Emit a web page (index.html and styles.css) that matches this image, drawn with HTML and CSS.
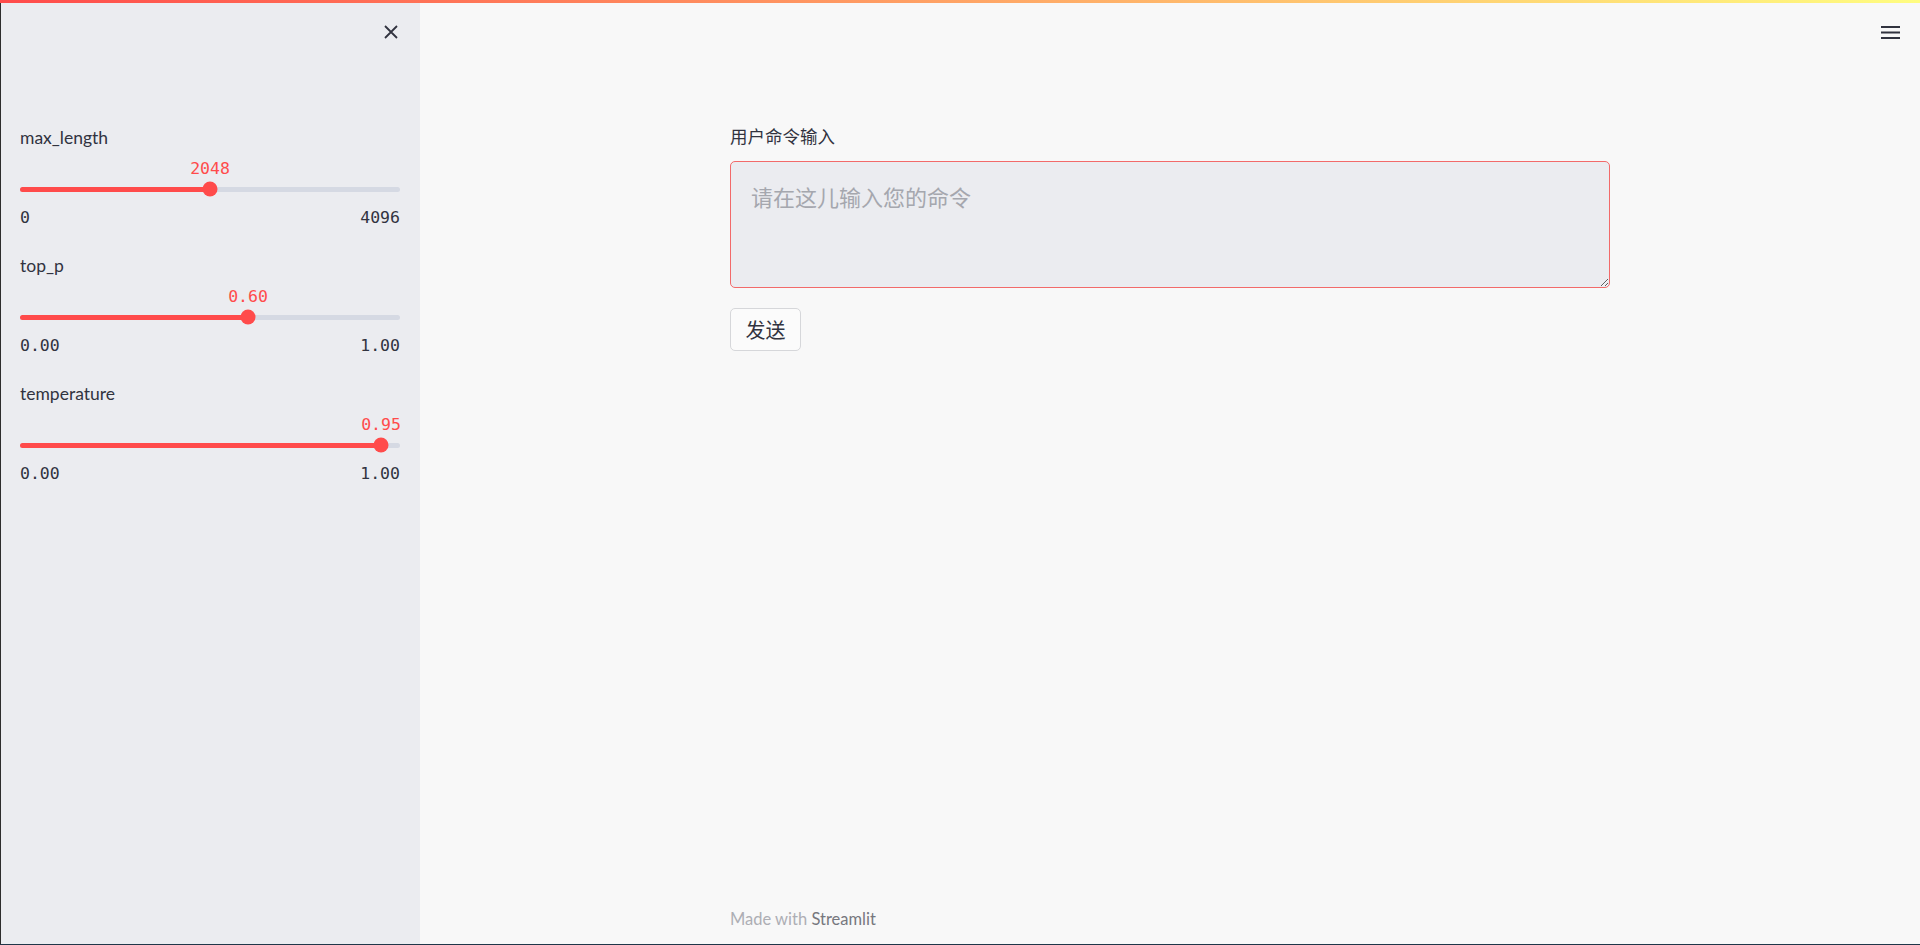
FILE: index.html
```html
<!DOCTYPE html>
<html lang="zh">
<head>
    <meta charset="UTF-8">
    <meta name="viewport" content="width=device-width, initial-scale=1.0">
    <title>app</title>
    <link rel="stylesheet" href="styles.css">
</head>
<body>
    <!-- top decoration -->
    <div class="decoration"></div>

    <div class="app">
        <aside class="sidebar">
            <div class="sidebar-head">
                <button class="close-btn" aria-label="close">
                    <svg width="14" height="14" viewBox="0 0 14 14">
                        <path d="M1 1 L13 13 M13 1 L1 13" stroke="#31333f" stroke-width="1.8" fill="none"/>
                    </svg>
                </button>
            </div>

            <div class="slider">
                <div class="slider-label">max_length</div>
                <div class="slider-value-row">
                    <span class="slider-value" style="left: 50%">2048</span>
                </div>
                <div class="track-wrap">
                    <div class="track"><div class="fill" style="width: 50%"></div></div>
                    <div class="thumb" style="left: 50%"></div>
                </div>
                <div class="ticks"><span>0</span><span>4096</span></div>
            </div>

            <div class="slider">
                <div class="slider-label">top_p</div>
                <div class="slider-value-row">
                    <span class="slider-value" style="left: 60%">0.60</span>
                </div>
                <div class="track-wrap">
                    <div class="track"><div class="fill" style="width: 60%"></div></div>
                    <div class="thumb" style="left: 60%"></div>
                </div>
                <div class="ticks"><span>0.00</span><span>1.00</span></div>
            </div>

            <div class="slider">
                <div class="slider-label">temperature</div>
                <div class="slider-value-row">
                    <span class="slider-value" style="left: 95%">0.95</span>
                </div>
                <div class="track-wrap">
                    <div class="track"><div class="fill" style="width: 95%"></div></div>
                    <div class="thumb" style="left: 95%"></div>
                </div>
                <div class="ticks"><span>0.00</span><span>1.00</span></div>
            </div>
        </aside>

        <main class="main">
            <div class="topbar">
                <button class="menu-btn" aria-label="menu">
                    <svg width="19" height="13" viewBox="0 0 19 13">
                        <rect x="0" y="0" width="19" height="2" fill="#31333f"/>
                        <rect x="0" y="5.5" width="19" height="2" fill="#31333f"/>
                        <rect x="0" y="11" width="19" height="2" fill="#31333f"/>
                    </svg>
                </button>
            </div>

            <div class="block">
                <label class="field-label" for="cmd">用户命令输入</label>
                <textarea id="cmd" class="cmd-input" placeholder="请在这儿输入您的命令" autofocus></textarea>
                <button class="send-btn">发送</button>
            </div>

            <footer class="footer">Made with <span class="brand">Streamlit</span></footer>
        </main>
    </div>
</body>
</html>
```

FILE: styles.css
```css
* {
    box-sizing: border-box;
}

body {
    margin: 0;
    height: 100vh;
    font-family: Lato, "Noto Sans CJK SC", sans-serif;
    color: #31333f;
    background: #f8f8f8;
    border-bottom: 1px solid #1f3649;
    overflow: hidden;
}

/* Decoration bar */
.decoration {
    position: absolute;
    top: 0;
    left: 0;
    right: 0;
    height: 3px;
    background: linear-gradient(90deg, #ff4b4b, #fffd80);
    z-index: 10;
}

.app {
    display: flex;
    height: 100%;
}

/* Sidebar */
.sidebar {
    width: 420px;
    flex-shrink: 0;
    background: #ebecf0;
    border-left: 1px solid #2d2d2d;
    padding: 0 20px 0 19px;
}

.sidebar-head {
    height: 64px;
    display: flex;
    justify-content: flex-end;
    align-items: center;
    margin-right: 2px;
    margin-bottom: 63px;
}

.close-btn,
.menu-btn {
    border: none;
    background: none;
    padding: 0;
    display: flex;
    cursor: pointer;
}

.slider {
    margin-bottom: 27px;
}

.slider-label {
    font-size: 17.5px;
    line-height: 22px;
}

.slider-value-row {
    position: relative;
    height: 20px;
    margin-top: 10px;
}

.slider-value {
    position: absolute;
    top: 0;
    transform: translateX(-50%);
    font-family: "DejaVu Sans Mono", monospace;
    font-size: 16.5px;
    line-height: 20px;
    color: #ff4b4b;
}

.track-wrap {
    position: relative;
    height: 16px;
    margin-top: 2px;
    display: flex;
    align-items: center;
}

.track {
    width: 100%;
    height: 5px;
    border-radius: 3px;
    background: #d5d9e3;
    overflow: hidden;
}

.fill {
    height: 100%;
    background: #ff4b4b;
}

.thumb {
    position: absolute;
    top: 50%;
    width: 15px;
    height: 15px;
    border-radius: 50%;
    background: #ff4b4b;
    transform: translate(-50%, -50%);
}

.ticks {
    display: flex;
    justify-content: space-between;
    margin-top: 11px;
    font-family: "DejaVu Sans Mono", monospace;
    font-size: 16.5px;
    line-height: 20px;
}

/* Main area */
.main {
    flex: 1;
    display: flex;
    flex-direction: column;
}

.topbar {
    height: 64px;
    display: flex;
    justify-content: flex-end;
    align-items: center;
    padding-right: 20px;
}

.block {
    width: 880px;
    margin: 0 auto;
    padding-top: 61px;
    display: flex;
    flex-direction: column;
    align-items: flex-start;
}

.field-label {
    font-family: "Noto Sans CJK SC", sans-serif;
    font-size: 17.5px;
    line-height: 22px;
    margin-bottom: 14px;
}

.cmd-input {
    width: 100%;
    height: 127px;
    padding: 19px 20px;
    background: #ebecf0;
    border: 1px solid #f26a6a;
    border-radius: 5px;
    outline: none;
    font-family: "Noto Sans CJK SC", sans-serif;
    font-size: 22px;
    line-height: 31px;
    color: #31333f;
    caret-color: #31333f;
    resize: vertical;
}

.cmd-input::placeholder {
    color: #a5a7ae;
}

.send-btn {
    margin-top: 20px;
    width: 71px;
    height: 43px;
    background: #fbfbfb;
    border: 1px solid #d6d7da;
    border-radius: 5px;
    font-family: "Noto Sans CJK SC", sans-serif;
    font-size: 20px;
    color: #31333f;
    cursor: pointer;
}

.footer {
    width: 880px;
    margin: auto auto 0;
    padding-bottom: 14px;
    font-size: 16.5px;
    line-height: 22px;
    color: #adaeb4;
}

.brand {
    color: #76777e;
}
```
